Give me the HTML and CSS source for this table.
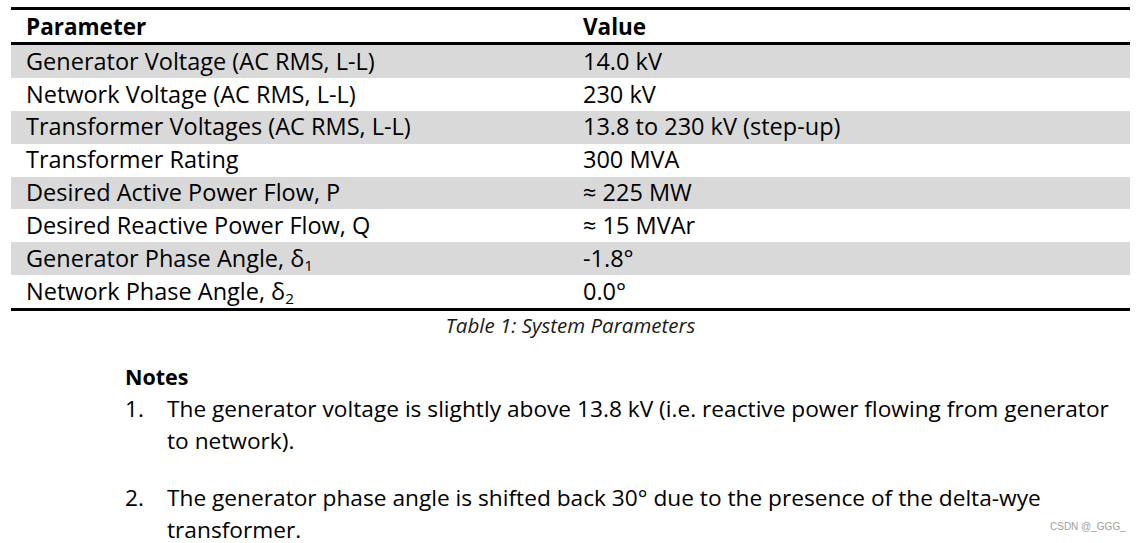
FILE: index.html
```html
<!DOCTYPE html>
<html lang="en">
<head>
    <meta charset="UTF-8">
    <meta name="viewport" content="width=device-width, initial-scale=1.0">
    <title>System Parameters</title>
    <link rel="stylesheet" href="styles.css">
</head>
<body>
    <div class="wrap">
        <table class="params">
            <caption>Table 1: System Parameters</caption>
            <thead>
                <tr>
                    <th class="name">Parameter</th>
                    <th>Value</th>
                </tr>
            </thead>
            <tbody>
                <tr class="shade"><td>Generator Voltage (AC RMS, L-L)</td><td>14.0 kV</td></tr>
                <tr><td>Network Voltage (AC RMS, L-L)</td><td>230 kV</td></tr>
                <tr class="shade"><td>Transformer Voltages (AC RMS, L-L)</td><td>13.8 to 230 kV (step-up)</td></tr>
                <tr><td>Transformer Rating</td><td>300 MVA</td></tr>
                <tr class="shade"><td>Desired Active Power Flow, P</td><td>&asymp; 225 MW</td></tr>
                <tr><td>Desired Reactive Power Flow, Q</td><td>&asymp; 15 MVAr</td></tr>
                <tr class="shade"><td>Generator Phase Angle, &delta;<sub>1</sub></td><td>-1.8&deg;</td></tr>
                <tr><td>Network Phase Angle, &delta;<sub>2</sub></td><td>0.0&deg;</td></tr>
            </tbody>
        </table>

        <div class="notes">
            <h4>Notes</h4>
            <ol>
                <li>The generator voltage is slightly above 13.8 kV (i.e. reactive power flowing from generator to network).</li>
                <li>The generator phase angle is shifted back 30&deg; due to the presence of the delta-wye transformer.</li>
            </ol>
        </div>
    </div>
    <span class="mark">CSDN @_GGG_</span>
</body>
</html>
```

FILE: styles.css
```css
body {
    margin: 0;
    font-family: "Open Sans", Lato, sans-serif;
    color: #000;
    background: #fff;
    overflow: hidden;
}
.wrap {
    padding: 7px 9px 0 11px;
}
.params {
    width: 1119px;
    border-collapse: collapse;
    border-top: 3px solid #000;
    border-bottom: 3px solid #000;
    font-size: 23.5px;
}
.params caption {
    caption-side: bottom;
    font-style: italic;
    font-size: 20.5px;
    line-height: 24px;
    padding-top: 2px;
    color: #1a1a1a;
}
.params th {
    text-align: left;
    height: 29px;
    padding: 3px 15px 0;
    border-bottom: 3px solid #000;
    font-weight: 700;
    font-size: 22.5px;
    line-height: 1;
}
.params th.name {
    width: 527px;
}
.params td {
    height: 32.9px;
    padding: 0 15px;
    line-height: 1;
}
.params sub {
    font-size: 65%;
    vertical-align: -4px;
    line-height: 0;
}
.shade td {
    background-color: #d9d9d9;
}
.notes {
    margin: 24px 0 0 114px;
    font-size: 22.7px;
    width: 1000px;
}
.notes h4 {
    margin: 0;
    font-size: 21.5px;
    font-weight: 700;
    line-height: 32px;
}
.notes ol {
    margin: 0;
    padding: 0;
    list-style: none;
    counter-reset: note;
}
.notes li {
    counter-increment: note;
    padding-left: 42px;
    line-height: 31.5px;
    margin-bottom: 26px;
}
.notes li:last-child {
    margin-bottom: 0;
}
.notes li::before {
    content: counter(note) ".";
    display: inline-block;
    width: 42px;
    margin-left: -42px;
}
.mark {
    position: absolute;
    left: 1050px;
    top: 521px;
    font-family: "Liberation Sans", sans-serif;
    font-size: 10px;
    color: #a0a0a0;
}
```
